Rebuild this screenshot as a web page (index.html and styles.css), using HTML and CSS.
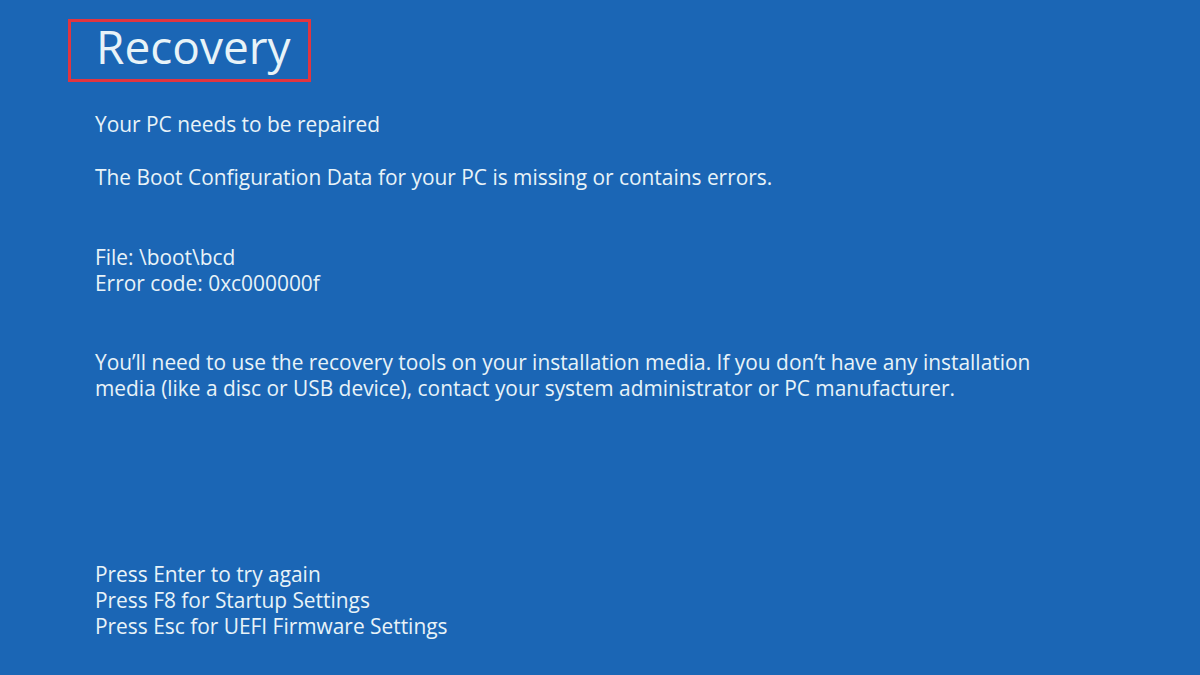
FILE: index.html
```html
<!DOCTYPE html>
<html lang="en">

<head>
    <meta charset="UTF-8">
    <meta name="viewport" content="width=device-width, initial-scale=1.0">
    <title>Recovery</title>
    <link rel="stylesheet" href="styles.css">
</head>

<body>
    <div class="screen">
        <div class="title-box">
            <h1 class="title">Recovery</h1>
        </div>

        <p class="line first">Your PC needs to be repaired</p>
        <p class="line gap-sm">The Boot Configuration Data for your PC is missing or contains errors.</p>

        <div class="block file-info">
            <p class="line">File: \boot\bcd</p>
            <p class="line">Error code: 0xc000000f</p>
        </div>

        <div class="block">
            <p class="line">You’ll need to use the recovery tools on your installation media. If you don’t have any installation</p>
            <p class="line">media (like a disc or USB device), contact your system administrator or PC manufacturer.</p>
        </div>

        <div class="keys">
            <p class="line">Press Enter to try again</p>
            <p class="line">Press F8 for Startup Settings</p>
            <p class="line">Press Esc for UEFI Firmware Settings</p>
        </div>
    </div>
</body>

</html>
```

FILE: styles.css
```css
/* base */
* {
    margin: 0;
    padding: 0;
    box-sizing: border-box;
}

body {
    width: 1200px;
    height: 675px;
    overflow: hidden;
    background-color: #1b66b5;
    color: #e8f3f8;
    font-family: 'Open Sans', 'Noto Sans', sans-serif;
}

.screen {
    display: flex;
    flex-direction: column;
    align-items: flex-start;
    padding: 19px 0 0 95px;
}

/* title with red marker box */
.title-box {
    margin-left: -27px;
    width: 243px;
    height: 63px;
    border: 3px solid #e2353f;
    padding-left: 25px;
    display: flex;
    align-items: center;
}

.title {
    font-size: 46px;
    font-weight: 400;
    line-height: 1;
    margin-top: -9px;
}

/* text rows */
.line {
    font-size: 20.9px;
    line-height: 26px;
    white-space: nowrap;
}

.first {
    margin-top: 29px;
}

.gap-sm {
    margin-top: 27px;
}

.block {
    margin-top: 53px;
}

.file-info {
    margin-top: 54px;
}

.keys {
    margin-top: 160px;
}
```
